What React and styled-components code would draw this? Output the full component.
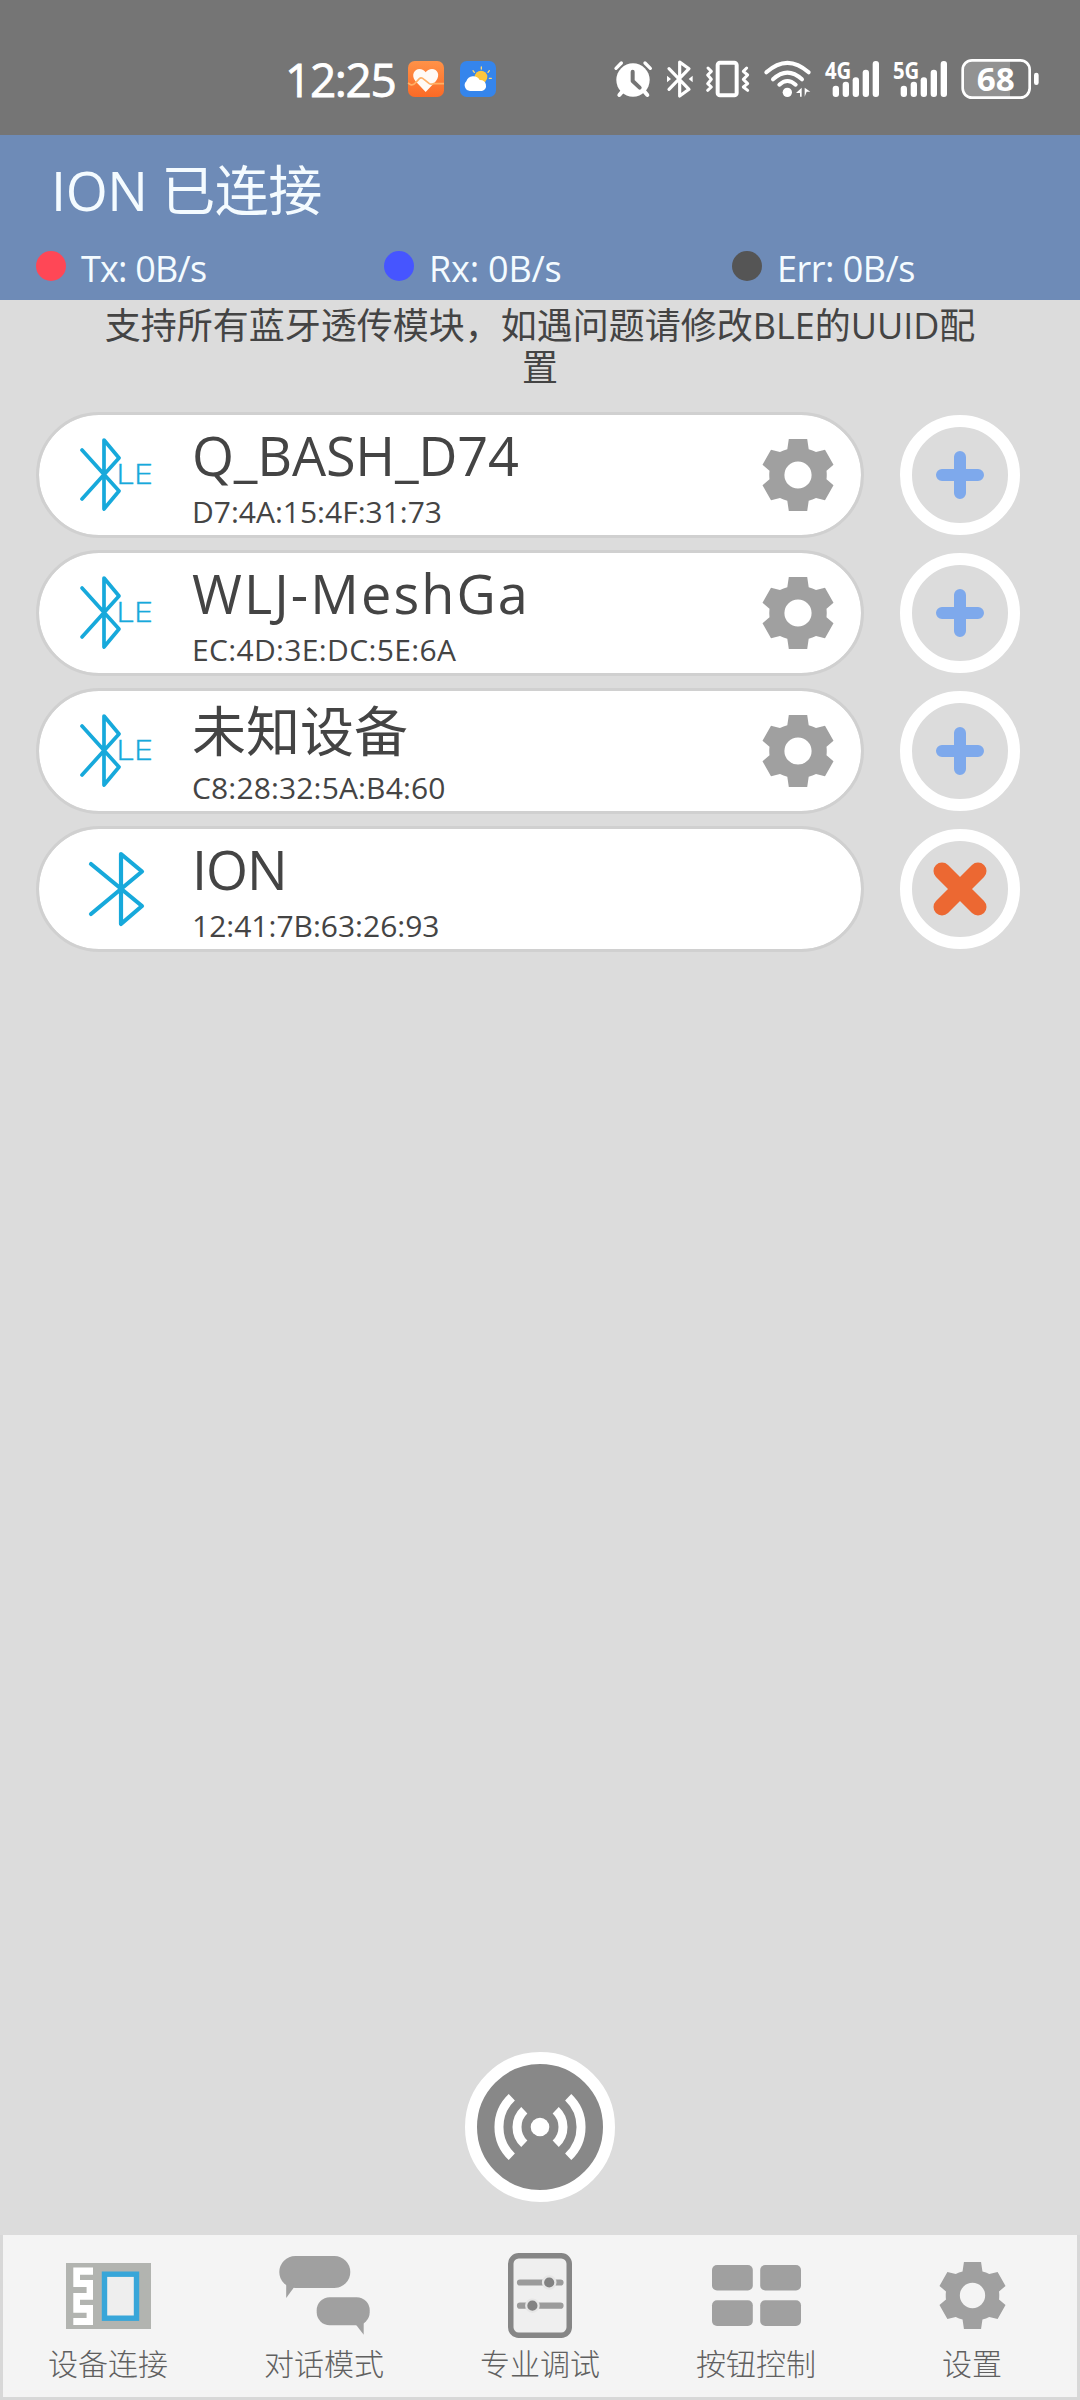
import React from 'react'
import styled, { createGlobalStyle } from 'styled-components'

const white = '#ffffff'
const page = '#dcdcdc'
const statusGrey = '#757575'
const headerBlue = '#6e8bb7'
const ink = '#444444'
const iconGrey = '#a0a0a0'
const cyan = '#17a9db'

const GlobalStyle = createGlobalStyle`
  * {
    box-sizing: border-box;
  }

  body {
    margin: 0;
    background-color: ${page};
    font-family: 'Open Sans', 'Noto Sans CJK SC', sans-serif;
  }

  svg {
    display: block;
    flex: none;
    overflow: visible;
  }
`

const Screen = styled.div`
  display: flex;
  flex-direction: column;
  width: 1080px;
  height: 2400px;
  background-color: ${page};
  overflow: hidden;
`

const StatusBar = styled.div`
  display: flex;
  justify-content: space-between;
  align-items: center;
  height: 135px;
  padding: 23px 41px 0 285px;
  background-color: ${statusGrey};
`

const StatusGroup = styled.div`
  display: flex;
  align-items: center;
  gap: ${({ gap }) => gap}px;
`

const Clock = styled.div`
  width: 107px;
  font-size: 46px;
  line-height: 38px;
  letter-spacing: -1.4px;
  white-space: nowrap;
  color: ${white};
  -webkit-text-stroke: 0.8px ${white};
`

const Header = styled.header`
  display: flex;
  flex-direction: column;
  height: 165px;
  padding: 22px 36px 0;
  background-color: ${headerBlue};
  color: #f4fbff;
`

const Title = styled.h1`
  margin: 0;
  padding-left: 15px;
  font-size: 54px;
  font-weight: 400;
  line-height: 66px;
  letter-spacing: -0.4px;
`

const Counters = styled.div`
  display: flex;
  margin-top: 22px;
`

const Counter = styled.div`
  display: flex;
  flex: none;
  align-items: center;
  gap: 15px;
  width: 348px;
  font-size: 36px;
  line-height: 47px;
  letter-spacing: ${({ spacing }) => spacing}px;
`

const Dot = styled.span`
  width: 30px;
  height: 30px;
  margin-bottom: 5px;
  border-radius: 50%;
  background-color: ${({ color }) => color};
`

const Hint = styled.p`
  margin: 5px 90px 0;
  font-size: 36px;
  line-height: 42px;
  text-align: center;
  color: ${ink};
`

const DeviceList = styled.div`
  display: flex;
  flex-direction: column;
  flex: 1;
  gap: 12px;
  padding: 23px 60px 0 36px;
`

const DeviceRow = styled.div`
  display: flex;
  align-items: center;
  justify-content: space-between;
`

const DeviceCard = styled.div`
  display: flex;
  align-items: center;
  width: 828px;
  height: 126px;
  padding-right: 27px;
  border: 3px solid #d0d0d0;
  border-radius: 63px;
  background-color: ${white};
  background-clip: padding-box;
`

const DeviceIcon = styled.div`
  display: flex;
  width: 153px;
  padding-left: ${({ inset }) => inset}px;
`

const DeviceText = styled.div`
  flex: 1;
  height: 120px;
  color: ${ink};
  white-space: nowrap;
`

const DeviceName = styled.div`
  height: 74px;
  font-size: 54px;
  line-height: 81px;
  letter-spacing: ${({ spacing = 0 }) => spacing}px;
`

const DeviceMac = styled.div`
  font-size: 30px;
  line-height: 46px;
  letter-spacing: ${({ spacing = 0 }) => spacing}px;
`

const RoundButton = styled.button`
  display: flex;
  align-items: center;
  justify-content: center;
  width: ${({ size }) => size}px;
  height: ${({ size }) => size}px;
  padding: 0;
  border: 12px solid ${white};
  border-radius: 50%;
  background-color: ${({ fill }) => fill};
`

const ScanArea = styled.div`
  display: flex;
  justify-content: center;
  padding-bottom: 33px;
`

const TabBar = styled.nav`
  display: flex;
  height: 165px;
  background-color: #f4f4f4;
  box-shadow: inset 3px 0 #d8d8d8, inset -3px 0 #d8d8d8, inset 0 -3px #d8d8d8;
`

const Tab = styled.div`
  display: flex;
  flex-direction: column;
  align-items: center;
  width: 216px;
  padding-top: 18px;
`

const TabIcon = styled.div`
  display: flex;
  align-items: center;
  height: 85px;
`

const TabLabel = styled.div`
  margin-top: 5px;
  font-size: 30px;
  font-weight: 300;
  line-height: 42px;
  color: #606060;
`

/* status bar icons */

const HealthIcon = () => (
  <svg width="36" height="36" viewBox="0 0 108 108">
    <defs>
      <linearGradient id="health" x1="0" y1="0" x2="0" y2="1">
        <stop offset="0" stopColor="#ff9248" />
        <stop offset="1" stopColor="#fb6a26" />
      </linearGradient>
    </defs>
    <rect width="108" height="108" rx="20" fill="url(#health)" />
    <path d="M53 93 L22 60 C8 42 20 24 34 24 C43 24 49 28 53 34 C57 28 64 24 72 24 C88 24 98 42 84 60 Z" fill="#fffaf5" />
    <path d="M0 66 L8 71 Q16 74 24 64 L34 53 Q40 48 48 55 L64 68 Q68 71 76 68 H108" fill="none" stroke="#ffb066" strokeWidth="5" />
  </svg>
)

const WeatherIcon = () => (
  <svg width="36" height="36" viewBox="0 0 108 108">
    <rect width="108" height="108" rx="20" fill="#3585ec" />
    <g stroke="#ffd873" strokeWidth="4" strokeLinecap="round">
      <path d="M64 18 V24 M39 29 L43 34 M88 29 L84 34 M88 52 H94" />
    </g>
    <circle cx="63" cy="48" r="19" fill="#fcc63d" />
    <path d="M30 90 A17 17 0 0 1 19 61 A22 22 0 0 1 59 57 A18 17 0 0 1 66 90 Z" fill="#fff" />
  </svg>
)

const AlarmIcon = () => (
  <svg width="39" height="38" viewBox="37 60 117 114" fill="none" stroke="#fff" strokeLinecap="round">
    <circle cx="100" cy="120" r="50" fill="#fff" stroke="none" />
    <path d="M49 85 L65 69 M136 69 L152 85" strokeWidth="10" />
    <path d="M59 165 L70 152 M143 165 L132 152" strokeWidth="12" />
    <path d="M99 95 V123 L120 143" stroke={statusGrey} strokeWidth="12" strokeLinejoin="round" />
  </svg>
)

const StatusBluetoothIcon = () => (
  <svg width="26" height="38" viewBox="195 60 78 114" fill="none" stroke="#fff">
    <path d="M207 86 L267 148 L239 168 V66 L267 86 L207 148" strokeWidth="9.5" strokeLinecap="round" strokeLinejoin="round" />
    <path d="M201 107 L213 117 L201 127 Z M278 107 L266 117 L278 127 Z" fill="#fff" stroke="none" />
  </svg>
)

const VibrateIcon = () => (
  <svg width="45" height="38" viewBox="315 60 135 114" fill="none" stroke="#fff" strokeWidth="9" strokeLinecap="round" strokeLinejoin="round">
    <rect x="353" y="68" width="57" height="98" rx="7" strokeWidth="12" />
    <path d="M324 84 L334 94 L323 105 L334 118 L323 131 L334 141 L323 151" />
    <path d="M440 84 L430 94 L443 105 L430 118 L443 131 L430 141 L443 151" />
  </svg>
)

const WifiIcon = () => (
  <svg width="47" height="38" viewBox="492 60 141 114" fill="none" stroke="#fff" strokeWidth="12" strokeLinecap="round">
    <path d="M499 97 Q562 40 626 97" />
    <path d="M519 118 Q562 78 606 118" />
    <path d="M538 134 Q562 112 587 134" />
    <circle cx="562" cy="157" r="14" fill="#fff" stroke="none" />
    <path d="M588 159 L605 143 V170 H600 V159 Z M614 143 L631 155 H620 L614 170 Z" fill="#fff" stroke="none" />
  </svg>
)

const SignalIcon = ({ label }) => (
  <svg width="54" height="38" viewBox="15 60 162 114" fill="#fff">
    <text x="15" y="117" fontSize="72" fontWeight="700" textLength="79" lengthAdjust="spacingAndGlyphs">{label}</text>
    <rect x="38" y="137" width="19" height="34" rx="9" />
    <rect x="68" y="125" width="19" height="46" rx="9" />
    <rect x="98" y="112" width="19" height="59" rx="9" />
    <rect x="128" y="89" width="19" height="82" rx="9" />
    <rect x="158" y="63" width="19" height="108" rx="9" />
  </svg>
)

const BatteryIcon = () => (
  <svg width="78" height="40" viewBox="423 57 234 120">
    <path d="M455 61 H570 V173 H455 Q428 173 428 146 V88 Q428 61 455 61 Z" fill="#929292" />
    <rect x="428" y="61" width="201" height="112" rx="28" fill="none" stroke="#fff" strokeWidth="8" />
    <rect x="642" y="98" width="14" height="37" rx="7" fill="#fff" />
    <text x="470" y="153" fontSize="99" fontWeight="700" fill="#fff" textLength="114" lengthAdjust="spacingAndGlyphs">68</text>
  </svg>
)

/* device list icons */

const BleIcon = () => (
  <svg width="72" height="74" viewBox="80 438 72 74" fill="none" stroke={cyan}>
    <path d="M82 450 L119 491 L104 509 V440 L119 458 L82 499" strokeWidth="3.7" strokeLinecap="round" strokeLinejoin="round" />
    <text x="116" y="484.2" fontSize="28" fontWeight="300" fill={cyan} stroke={cyan} strokeWidth="0.3" textLength="37" lengthAdjust="spacingAndGlyphs">LE</text>
  </svg>
)

const BluetoothIcon = () => (
  <svg width="56" height="76" viewBox="88 851 56 76" fill="none" stroke={cyan}>
    <path d="M91 864 L142 906 L121 924 V854 L142 871.5 L91 914" strokeWidth="4.2" strokeLinecap="round" strokeLinejoin="round" />
  </svg>
)

const GearIcon = ({ width, height }) => (
  <svg width={width} height={height} viewBox="-36 -36 72 72" preserveAspectRatio="none">
    <path
      fill={iconGrey}
      fillRule="evenodd"
      d="M-9.2 -36 H9.2 L10.7 -25.7 Q14.6 -24.8 18 -23 L27 -25.3 L35.5 -10.3 L28.5 -4.3 Q29 0 28.5 4.3 L35.5 10.3 L27 25.3 L18 23 Q14.6 24.8 10.7 25.7 L9.2 36 H-9.2 L-10.7 25.7 Q-14.6 24.8 -18 23 L-27 25.3 L-35.5 10.3 L-28.5 4.3 Q-29 0 -28.5 -4.3 L-35.5 -10.3 L-27 -25.3 L-18 -23 Q-14.6 -24.8 -10.7 -25.7 Z
        M13.6 0 A13.6 13.6 0 1 0 -13.6 0 A13.6 13.6 0 1 0 13.6 0 Z"
    />
  </svg>
)

const PlusIcon = () => (
  <svg width="48" height="48" viewBox="0 0 48 48">
    <path d="M24 6 V42 M6 24 H42" stroke="#7ea9ec" strokeWidth="12" strokeLinecap="round" />
  </svg>
)

const CrossIcon = () => (
  <svg width="54" height="54" viewBox="-27 -27 54 54">
    <path d="M-18 -18 L18 18 M18 -18 L-18 18" stroke="#ec6832" strokeWidth="17" strokeLinecap="round" />
  </svg>
)

const ScanIcon = () => (
  <svg width="96" height="70" viewBox="-48 -35 96 70" fill="none" stroke="#fff" strokeWidth="9">
    <circle r="9.3" fill="#fff" stroke="none" />
    <path d="M-15.7 -16.8 A23 23 0 0 0 -15.7 16.8 M15.7 -16.8 A23 23 0 0 1 15.7 16.8" />
    <path d="M-28.2 -29.8 A41 41 0 0 0 -28.2 29.8 M28.2 -29.8 A41 41 0 0 1 28.2 29.8" />
  </svg>
)

/* tab icons */

const ConnectIcon = () => (
  <svg width="85" height="66" viewBox="0 0 85 66">
    <rect width="85" height="66" fill="#b2b4b0" />
    <path d="M7.3 4.5 H27 V11.7 H14 V17 H27 V36.7 H14 V42 H27 V62 H7.3 V55 H20.6 V49.7 H7.3 V30 H20.6 V24 H7.3 Z" fill="#fff" />
    <rect x="38.5" y="11.2" width="32" height="44" fill="#eeeeee" stroke="#38a6d9" strokeWidth="5.4" />
  </svg>
)

const ChatIcon = () => (
  <svg width="91" height="79" viewBox="278.3 2256 91 79" fill={iconGrey}>
    <rect x="278.6" y="2256" width="71" height="32" rx="16" />
    <path d="M285.5 2283 V2298 L293 2287.8 V2283 Z" />
    <rect x="316" y="2297.3" width="53" height="28" rx="13" />
    <path d="M355.5 2325 L363 2334.8 V2321 Z" />
  </svg>
)

const SlidersIcon = () => (
  <svg width="64" height="85" viewBox="0 0 64 85">
    <rect x="2.75" y="2.75" width="58.5" height="79.5" rx="8" fill="#efefef" stroke="#868686" strokeWidth="5.5" />
    <path d="M12 29.5 H52.5 M12 52.7 H52.5" stroke="#9b9b9b" strokeWidth="6.2" strokeLinecap="round" />
    <g fill="#828282" stroke="#e6e6e6" strokeWidth="2.2">
      <circle cx="41.2" cy="29.5" r="6.2" />
      <circle cx="24.4" cy="52.7" r="6.2" />
    </g>
  </svg>
)

const ButtonsIcon = () => (
  <svg width="89" height="61" viewBox="0 0 89 61" fill={iconGrey}>
    <rect width="40.8" height="25.5" rx="5" />
    <rect x="48.2" width="40.8" height="25.5" rx="5" />
    <rect y="35.2" width="40.8" height="25.7" rx="5" />
    <rect x="48.2" y="35.2" width="40.8" height="25.7" rx="5" />
  </svg>
)

const devices = [
  { name: 'Q_BASH_D74', mac: 'D7:4A:15:4F:31:73', ble: true, nameSpacing: -0.2 },
  { name: 'WLJ-MeshGa', mac: 'EC:4D:3E:DC:5E:6A', ble: true, nameSpacing: 2.1, macSpacing: 0.35 },
  { name: '未知设备', mac: 'C8:28:32:5A:B4:60', ble: true, macSpacing: 0.15 },
  { name: 'ION', mac: '12:41:7B:63:26:93', connected: true, nameSpacing: -1 }
]

const counters = [
  { label: 'Tx: 0B/s', color: '#ff4756', spacing: -0.8 },
  { label: 'Rx: 0B/s', color: '#4655ff', spacing: -0.2 },
  { label: 'Err: 0B/s', color: '#555555', spacing: -0.5 }
]

const tabs = [
  { label: '设备连接', icon: <ConnectIcon /> },
  { label: '对话模式', icon: <ChatIcon /> },
  { label: '专业调试', icon: <SlidersIcon /> },
  { label: '按钮控制', icon: <ButtonsIcon /> },
  { label: '设置', icon: <GearIcon width={67} height={67} /> }
]

const Device = ({ name, mac, ble, connected, nameSpacing, macSpacing }) => (
  <DeviceRow>
    <DeviceCard>
      <DeviceIcon inset={ble ? 41 : 49}>
        {ble ? <BleIcon /> : <BluetoothIcon />}
      </DeviceIcon>
      <DeviceText>
        <DeviceName spacing={nameSpacing}>{name}</DeviceName>
        <DeviceMac spacing={macSpacing}>{mac}</DeviceMac>
      </DeviceText>
      {ble && <GearIcon width={72} height={72} />}
    </DeviceCard>
    <RoundButton size={120} fill={page}>
      {connected ? <CrossIcon /> : <PlusIcon />}
    </RoundButton>
  </DeviceRow>
)

const App = () => (
  <Screen>
    <GlobalStyle />
    <StatusBar>
      <StatusGroup gap={16}>
        <Clock>12:25</Clock>
        <HealthIcon />
        <WeatherIcon />
      </StatusGroup>
      <StatusGroup gap={14}>
        <AlarmIcon />
        <StatusBluetoothIcon />
        <VibrateIcon />
        <WifiIcon />
        <SignalIcon label="4G" />
        <SignalIcon label="5G" />
        <BatteryIcon />
      </StatusGroup>
    </StatusBar>
    <Header>
      <Title>ION 已连接</Title>
      <Counters>
        {counters.map(({ label, color, spacing }) => (
          <Counter key={label} spacing={spacing}>
            <Dot color={color} />
            {label}
          </Counter>
        ))}
      </Counters>
    </Header>
    <Hint>支持所有蓝牙透传模块，如遇问题请修改BLE的UUID配置</Hint>
    <DeviceList>
      {devices.map(device => <Device key={device.mac} {...device} />)}
    </DeviceList>
    <ScanArea>
      <RoundButton size={150} fill="#888888">
        <ScanIcon />
      </RoundButton>
    </ScanArea>
    <TabBar>
      {tabs.map(({ label, icon }) => (
        <Tab key={label}>
          <TabIcon>{icon}</TabIcon>
          <TabLabel>{label}</TabLabel>
        </Tab>
      ))}
    </TabBar>
  </Screen>
)

export default App
